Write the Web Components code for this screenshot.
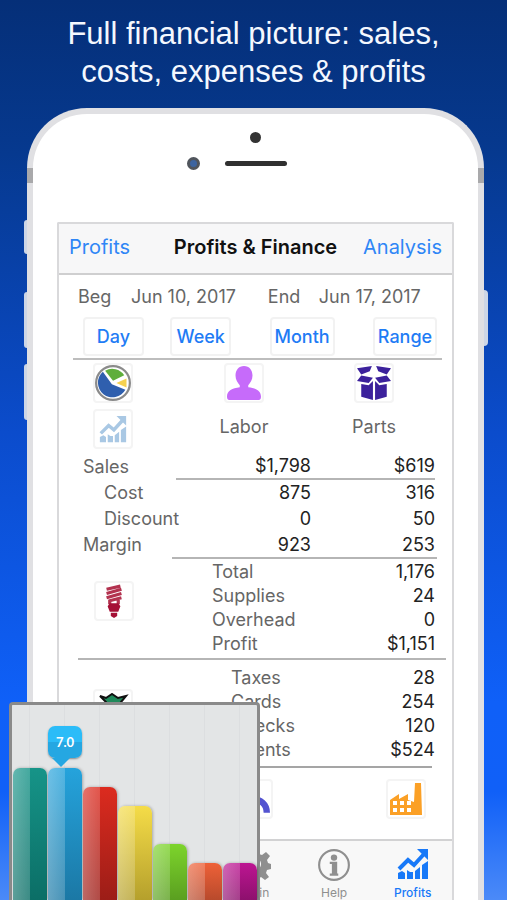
<!DOCTYPE html>
<html lang="en">
<head>
<meta charset="utf-8">
<meta name="viewport" content="width=device-width, initial-scale=1">
<title>Profits &amp; Finance</title>
<style>
  body {
    margin: 0;
    font-family: Inter, "Liberation Sans", sans-serif;
  }
</style>
</head>
<body>
<promo-page>
  <span slot="headline">Full financial picture: sales,<br>costs, expenses &amp; profits</span>
  <phone-frame>
    <nav-bar left="Profits" right="Analysis">Profits &amp; Finance</nav-bar>
    <date-range beg="Jun 10, 2017" end="Jun 17, 2017"></date-range>
    <finance-report></finance-report>
    <tab-bar></tab-bar>
  </phone-frame>
  <bar-chart slot="overlay"></bar-chart>
</promo-page>

<script>
const icons = {
  pie: `<circle cx="16" cy="16" r="15" fill="#fff" stroke="#8b8b8b" stroke-width="2"/>
    <path fill="#2f5fae" d="M15 17 7 6A13 13 0 1 0 27 22Z"/>
    <path fill="#5fae3c" d="M16 14 9 5A13 13 0 0 1 26 9Z"/>
    <path fill="#f5d150" d="m19 16 9-4v8Z"/>`,
  growth: `<path d="M1 25l4-2 3 2v6H1zM10 22l3 2h3v7h-6zM18 23l5-4v12h-5zM25 17l6-4v18h-6zM20 1h11v11z"/>
    <path fill="none" stroke="currentColor" stroke-width="4" d="M2 21 11 12l6 5L27 6"/>`,
  user: `<path d="M16 0c5 0 8 4 8 9 0 4-2 7-4 9v2c7 1 12 3 12 9 0 2-1 3-2 3H2c-1 0-2-1-2-3 0-6 5-8 12-9v-2c-2-2-4-5-4-9 0-5 3-9 8-9z"/>`,
  box: `<path d="M0 2 14 0 12 5 4 8zM32 2 18 0l2 5 8 3zM4 9l11 2-4 5-11-2zM28 9l-11 2 4 5 11-2zM4 17l7 1 4-4v18L4 29zM28 17l-7 1-4-4v18l11-3z"/>`,
  bulb: `<path fill="none" stroke="#b3324f" stroke-width="3" d="M9 5 22 2M9 9l14-4M9 13l14-4M11 16l12-3M12 15v4M20 14v5"/>
    <path d="M12 18h8l2 3-2 5h-8l-2-5zM13 27h6v3l-3 2-3-2z"/>`,
  money: `<path stroke="#111" stroke-width="2" d="M3 3 9 5 15 1 21 5 29 3 24 9 29 30H4L9 9z"/>`,
  headset: `<path fill="none" stroke="#5353d0" stroke-width="6" d="M3 29c0-17 26-17 26 0"/><circle cx="16" cy="9" r="6" fill="#ddd"/>`,
  factory: `<path fill-rule="evenodd" d="M0 17 9 11v5l9-5v6l6 2 1-19h6l1 32H0zM3 18v4h4v-4zm7 0v4h4v-4zm7 0v4h4v-4zM3 25v4h4v-4zm7 0v4h4v-4zm7 0v4h4v-4z"/>`,
  gear: `<path fill-rule="evenodd" d="M13 1h6l1 5 3 1 4-3 4 4-3 4 1 3 3 1v5l-4 1-1 3 3 4-4 3-4-3-3 2-1 3h-5l-1-4-3-1-4 3-4-4 3-4-1-3-3-1v-5l4-1 1-3-3-4 4-3 4 2 3-1zM16 10a6 6 0 1 0 .1 0z"/>`,
  info: `<circle cx="16" cy="16" r="14" fill="none" stroke="currentColor" stroke-width="2"/>
    <circle cx="16" cy="9" r="3"/><path d="M12 13h7v11h1v2h-8v-2h2v-9h-2z"/>`,
};

const svg = (name, size) =>
  `<svg viewBox="0 0 32 32" width="${size}" height="${size}" fill="currentColor" aria-hidden="true">${icons[name]}</svg>`;

class PromoPage extends HTMLElement {
  constructor() {
    super();
    this.attachShadow({ mode: "open" }).innerHTML = `
      <style>
        :host {
          display: flex;
          flex-direction: column;
          position: relative;
          height: 100vh;
          overflow: hidden;
          background: linear-gradient(#052f78, #06398f 17%, #0b4ccc 48%, #0f60f8 78%, #1060f8 88%, #4b8af8);
        }
        h1 {
          margin: 0;
          padding: 15px 16px 17px;
          color: #f4f8ff;
          font: 31px/38px "Liberation Sans", Arial, sans-serif;
          text-align: center;
        }
      </style>
      <h1><slot name="headline"></slot></h1>
      <slot></slot>
      <slot name="overlay"></slot>`;
  }
}
customElements.define("promo-page", PromoPage);

class PhoneFrame extends HTMLElement {
  constructor() {
    super();
    this.attachShadow({ mode: "open" }).innerHTML = `
      <style>
        * { box-sizing: border-box; }
        :host {
          display: block;
          box-sizing: border-box;
          position: relative;
          flex: 1 0 auto;
          margin: 0 23px 0 27px;
          padding: 0 24px;
          border: 6px solid #e0e0e3;
          border-bottom: 0;
          border-radius: 60px 60px 0 0;
          background: #fff;
        }
        .top {
          display: grid;
          grid-template-columns: 1fr 62px 1fr;
          grid-template-rows: 12px 40px;
          align-items: center;
          justify-items: center;
          align-content: start;
          height: 108px;
          padding-top: 17px;
        }
        .sensor { grid-column: 2; width: 11px; height: 11px; border-radius: 50%; background: #333; }
        .camera {
          grid-row: 2;
          justify-self: end;
          width: 13px;
          height: 13px;
          margin-right: 25px;
          border: 3px solid #50555c;
          border-radius: 50%;
          background: #3c64a0;
        }
        .speaker { grid-area: 2 / 2; width: 62px; height: 5px; border-radius: 3px; background: #303030; }
        .screen {
          border: 2px solid #d9d9db;
          border-bottom: 0;
          border-radius: 2px 2px 0 0;
          background: #fff;
        }
        .key { position: absolute; left: -9px; width: 3px; border-radius: 3px 0 0 3px; background: #cdd6e6; }
        .key.power { left: auto; right: -10px; width: 4px; border-radius: 0 4px 4px 0; }
        .seam { position: absolute; top: 54px; width: 6px; height: 15px; background: #a9a9ab; }
      </style>
      <i class="key" style="top: 106px; height: 34px"></i>
      <i class="key" style="top: 178px; height: 56px"></i>
      <i class="key" style="top: 250px; height: 56px"></i>
      <i class="key power" style="top: 176px; height: 56px"></i>
      <i class="seam" style="left: -6px"></i>
      <i class="seam" style="right: -6px"></i>
      <div class="top">
        <span class="sensor"></span>
        <span class="camera"></span>
        <span class="speaker"></span>
      </div>
      <div class="screen"><slot></slot></div>`;
  }
}
customElements.define("phone-frame", PhoneFrame);

class NavBar extends HTMLElement {
  connectedCallback() {
    this.attachShadow({ mode: "open" }).innerHTML = `
      <style>
        :host {
          display: grid;
          grid-template-columns: 1fr auto 1fr;
          align-items: center;
          height: 45px;
          padding: 0 10px 4px;
          border-bottom: 2px solid #cfcfd0;
          background: #f7f7f8;
          font-size: 20px;
        }
        a { color: #2f86f6; text-decoration: none; }
        a:last-of-type { justify-self: end; }
        h2 { margin: 0; color: #111; font-size: 20px; font-weight: 600; }
      </style>
      <a href="#">${this.getAttribute("left")}</a>
      <h2><slot></slot></h2>
      <a href="#">${this.getAttribute("right")}</a>`;
  }
}
customElements.define("nav-bar", NavBar);

class DateRange extends HTMLElement {
  connectedCallback() {
    this.attachShadow({ mode: "open" }).innerHTML = `
      <style>
        :host { display: block; padding: 10px 10px 0 14px; }
        .dates {
          display: grid;
          grid-template-columns: 53px 10fr 51px 9fr;
          padding: 0 0 8px 5px;
          color: #666;
          font-size: 18px;
          line-height: 24px;
          white-space: nowrap;
        }
        .periods {
          display: grid;
          grid-template-columns: 87fr 99fr 103fr 65fr;
          justify-items: start;
          padding: 0 4px 2px 10px;
          border-bottom: 2px solid #bdbdbd;
        }
        button {
          box-sizing: border-box;
          min-width: 61px;
          height: 39px;
          padding: 0 3px;
          border: 2px solid #f2f2f2;
          border-radius: 4px;
          background: #fff;
          color: #1f7cf5;
          font: 500 18px Inter, sans-serif;
        }
      </style>
      <div class="dates">
        <span>Beg</span><span>${this.getAttribute("beg")}</span>
        <span>End</span><span>${this.getAttribute("end")}</span>
      </div>
      <div class="periods">
        <button>Day</button>
        <button>Week</button>
        <button>Month</button>
        <button>Range</button>
      </div>`;
  }
}
customElements.define("date-range", DateRange);

class IconButton extends HTMLElement {
  connectedCallback() {
    this.attachShadow({ mode: "open" }).innerHTML = `
      <style>
        :host { display: inline-block; }
        button {
          display: grid;
          place-items: center;
          box-sizing: border-box;
          width: 40px;
          height: 40px;
          padding: 0;
          border: 2px solid #f4f4f4;
          border-radius: 4px;
          background: #fff;
          color: inherit;
        }
      </style>
      <button aria-label="${this.getAttribute("icon")}">${svg(this.getAttribute("icon"), this.getAttribute("size") || 34)}</button>`;
  }
}
customElements.define("icon-button", IconButton);

class FinanceReport extends HTMLElement {
  constructor() {
    super();
    this.attachShadow({ mode: "open" }).innerHTML = `
      <style>
        :host { display: block; color: #666; font-size: 18px; }
        .heads {
          display: grid;
          grid-template-columns: 120px 1fr 1fr;
          padding: 3px 13px 4px 0;
          line-height: 24px;
        }
        .heads div { display: flex; flex-direction: column; align-items: center; gap: 12px; }
        .heads .views { gap: 6px; padding-right: 12px; }
        table { width: 100%; border-collapse: collapse; white-space: nowrap; }
        th { padding: 0; font-weight: 400; text-align: left; }
        td { padding: 0; color: #222; text-align: right; }
        .sales { padding: 0 17px 0 24px; }
        .sales table { table-layout: fixed; }
        .sales tr { height: 26px; }
        .sales th:first-child { width: 93px; }
        .sales td:last-child { width: 124px; }
        .sales .sub { padding-left: 21px; }
        .sales tr:first-child td { border-bottom: 2px solid #b5b5b5; }
        .group { display: grid; grid-template-columns: 113px 1fr; }
        .group icon-button { justify-self: center; }
        .group tr { height: 24px; }
        .totals { margin: 0 6px 0 0; }
        .totals icon-button { margin: 24px 4px 0 0; }
        .totals .lines {
          margin-right: 9px;
          padding: 0 2px 3px 40px;
          border-top: 2px solid #b5b5b5;
        }
        .expenses {
          margin: 0 6px 0 19px;
          padding-top: 5px;
          border-top: 2px solid #b5b5b5;
          grid-template-columns: 74px 1fr;
        }
        .expenses icon-button { margin: 24px 4px 0 0; }
        .expenses .lines { padding: 0 11px 5px 79px; }
        .links {
          display: flex;
          justify-content: space-between;
          margin: 0 20px 0 19px;
          padding: 11px 6px 20px 155px;
          border-top: 2px solid #a5a5a5;
        }
      </style>
      <div class="heads">
        <div class="views">
          <icon-button icon="pie" size="36"></icon-button>
          <icon-button icon="growth" size="28" style="color: #a9c8e4"></icon-button>
        </div>
        <div><icon-button icon="user" style="color: #c66bfa"></icon-button>Labor</div>
        <div><icon-button icon="box" style="color: #3c219c"></icon-button>Parts</div>
      </div>
      <div class="sales">
        <table>
          <tr><th scope="row">Sales</th><td>$1,798</td><td>$619</td></tr>
          <tr><th scope="row" class="sub">Cost</th><td>875</td><td>316</td></tr>
          <tr><th scope="row" class="sub">Discount</th><td>0</td><td>50</td></tr>
          <tr><th scope="row">Margin</th><td>923</td><td>253</td></tr>
        </table>
      </div>
      <div class="group totals">
        <icon-button icon="bulb" style="color: #a50f35"></icon-button>
        <div class="lines">
          <table>
            <tr><th scope="row">Total</th><td>1,176</td></tr>
            <tr><th scope="row">Supplies</th><td>24</td></tr>
            <tr><th scope="row">Overhead</th><td>0</td></tr>
            <tr><th scope="row">Profit</th><td>$1,151</td></tr>
          </table>
        </div>
      </div>
      <div class="group expenses">
        <icon-button icon="money" size="32" style="color: #1f8a5b"></icon-button>
        <div class="lines">
          <table>
            <tr><th scope="row">Taxes</th><td>28</td></tr>
            <tr><th scope="row">Cards</th><td>254</td></tr>
            <tr><th scope="row">Checks</th><td>120</td></tr>
            <tr><th scope="row">Agents</th><td>$524</td></tr>
          </table>
        </div>
      </div>
      <div class="links">
        <icon-button icon="headset"></icon-button>
        <icon-button icon="factory" size="32" style="color: #fba026"></icon-button>
      </div>`;
  }
}
customElements.define("finance-report", FinanceReport);

class TabBar extends HTMLElement {
  constructor() {
    super();
    this.attachShadow({ mode: "open" }).innerHTML = `
      <style>
        :host {
          display: grid;
          grid-template-columns: repeat(5, 1fr);
          height: 61px;
          border-top: 2px solid #d2d2d3;
          background: #f8f8f8;
        }
        button {
          display: flex;
          flex-direction: column;
          align-items: center;
          justify-content: space-between;
          height: 60px;
          padding: 7px 0 0;
          border: 0;
          background: none;
          color: #8f8f8f;
          font: 12px/16px Inter, sans-serif;
        }
        button:first-of-type { grid-column: 3; }
        .on { color: #1879f8; font-weight: 500; }
      </style>
      <button>${svg("gear", 32)}Main</button>
      <button>${svg("info", 34)}Help</button>
      <button class="on">${svg("growth", 32)}Profits</button>`;
  }
}
customElements.define("tab-bar", TabBar);

class BarChart extends HTMLElement {
  constructor() {
    super();
    const bars = [
      [7, "#169488", "#0b6e66"],
      [7, "#25a3dc", "#1b78a5"],
      [6, "#dc2b1f", "#9c1d17"],
      [5, "#f5dc48", "#b5a02c"],
      [3, "#7dd42c", "#5a9f20"],
      [2, "#ee6138", "#b84a2c"],
      [2, "#bd1592", "#8d106d"],
    ];
    this.attachShadow({ mode: "open" }).innerHTML = `
      <style>
        :host {
          position: absolute;
          left: 9px;
          bottom: 0;
          display: flex;
          box-sizing: border-box;
          width: 251px;
          height: 198px;
          border: 3px solid #8a8a8a;
          border-bottom: 0;
          border-radius: 4px 4px 0 0;
          background: #e3e5e6;
        }
        .slot {
          display: flex;
          flex: 1;
          align-items: flex-end;
          background: linear-gradient(90deg, transparent 49%, #dcdee0 49%, #dcdee0 52%, transparent 52%);
        }
        .bar {
          position: relative;
          flex: 1;
          height: calc(var(--value) * 19px - 1px);
          margin-left: 1px;
          border-radius: 7px 7px 0 0;
          background: linear-gradient(90deg, #fff5, #fff3 50%, transparent 50%), linear-gradient(var(--from), var(--to));
          box-shadow: 1px 0 3px #0004;
        }
        .tip {
          position: absolute;
          left: 0;
          bottom: calc(100% + 10px);
          width: 34px;
          border-radius: 7px;
          background: linear-gradient(#2bbcf8 50%, #25a7e2 50%);
          box-shadow: 0 1px 2px #0006;
          color: #fff;
          font: bold 13px/32px Lato, sans-serif;
          text-align: center;
        }
        .tip::after {
          content: "";
          position: absolute;
          left: 4px;
          top: 100%;
          border: 9px solid transparent;
          border-top-color: #25a7e2;
          border-bottom: 0;
        }
      </style>
      ${bars.map(([value, from, to], i) => `
        <div class="slot">
          <div class="bar" style="--value: ${value}; --from: ${from}; --to: ${to}">
            ${i === 1 ? `<span class="tip">7.0</span>` : ""}
          </div>
        </div>`).join("")}`;
  }
}
customElements.define("bar-chart", BarChart);
</script>
</body>
</html>
